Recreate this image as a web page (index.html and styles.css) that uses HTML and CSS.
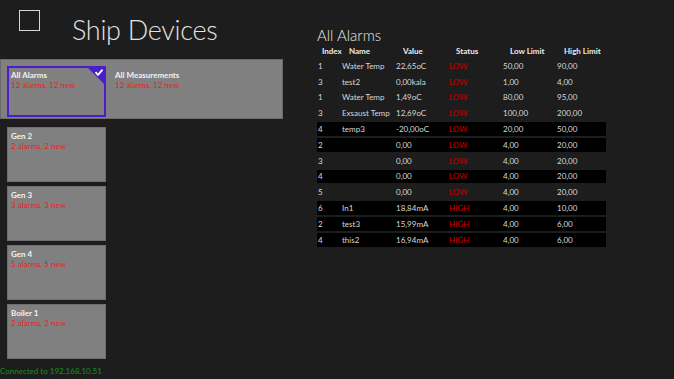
FILE: index.html
```html
<!DOCTYPE html>
<html>
<head>
<meta charset="utf-8">
<title>Ship Devices</title>
<link rel="stylesheet" href="styles.css">
</head>
<body>
<div class="app">
  <div class="left">
    <header class="header">
      <div class="logo-box"></div>
      <h1 class="title">Ship Devices</h1>
    </header>
    <div class="panel">
      <div class="tile tile-selected">
        <div class="tile-name">All Alarms</div>
        <div class="tile-sub">12 alarms, 12 new</div>
        <svg class="check" width="18" height="18" viewBox="0 0 18 18"><polygon points="0,0 18,0 18,18" fill="#4a1ec8"/><path d="M8.5 5.2 L11 7.8 L15.5 2.6" fill="none" stroke="#fff" stroke-width="1.8"/></svg>
      </div>
      <div class="tile tile-flat">
        <div class="tile-name">All Measurements</div>
        <div class="tile-sub">12 alarms, 12 new</div>
      </div>
    </div>
    <div class="tiles">
      <div class="tile"><div class="tile-name">Gen 2</div><div class="tile-sub">2 alarms, 2 new</div></div>
      <div class="tile"><div class="tile-name">Gen 3</div><div class="tile-sub">3 alarms, 3 new</div></div>
      <div class="tile"><div class="tile-name">Gen 4</div><div class="tile-sub">5 alarms, 5 new</div></div>
      <div class="tile"><div class="tile-name">Boiler 1</div><div class="tile-sub">2 alarms, 2 new</div></div>
    </div>
    <div class="status">Connected to 192.168.10.51</div>
  </div>
  <div class="right">
    <h2 class="section-title">All Alarms</h2>
    <div class="table">
      <div class="row head">
        <div class="c-idx">Index</div><div>Name</div><div>Value</div><div>Status</div><div>Low Limit</div><div>High Limit</div>
      </div>
      <div class="row"><div>1</div><div>Water Temp</div><div>22,65oC</div><div class="st">LOW</div><div>50,00</div><div>90,00</div></div>
      <div class="row"><div>3</div><div>test2</div><div>0,00kala</div><div class="st">LOW</div><div>1,00</div><div>4,00</div></div>
      <div class="row"><div>1</div><div>Water Temp</div><div>1,49oC</div><div class="st">LOW</div><div>80,00</div><div>95,00</div></div>
      <div class="row"><div>3</div><div>Exsaust Temp</div><div>12,69oC</div><div class="st">LOW</div><div>100,00</div><div>200,00</div></div>
      <div class="row dark"><div>4</div><div>temp3</div><div>-20,00oC</div><div class="st">LOW</div><div>20,00</div><div>50,00</div></div>
      <div class="row dark"><div>2</div><div></div><div>0,00</div><div class="st">LOW</div><div>4,00</div><div>20,00</div></div>
      <div class="row"><div>3</div><div></div><div>0,00</div><div class="st">LOW</div><div>4,00</div><div>20,00</div></div>
      <div class="row dark"><div>4</div><div></div><div>0,00</div><div class="st">LOW</div><div>4,00</div><div>20,00</div></div>
      <div class="row"><div>5</div><div></div><div>0,00</div><div class="st">LOW</div><div>4,00</div><div>20,00</div></div>
      <div class="row dark"><div>6</div><div>In1</div><div>18,84mA</div><div class="st">HIGH</div><div>4,00</div><div>10,00</div></div>
      <div class="row dark"><div>2</div><div>test3</div><div>15,99mA</div><div class="st">HIGH</div><div>4,00</div><div>6,00</div></div>
      <div class="row dark"><div>4</div><div>this2</div><div>16,94mA</div><div class="st">HIGH</div><div>4,00</div><div>6,00</div></div>
    </div>
  </div>
</div>
</body>
</html>
```
FILE: styles.css
```css
html, body {
  margin: 0;
  padding: 0;
}
body {
  background: #1d1d1d;
  width: 674px;
  height: 379px;
  overflow: hidden;
  font-family: "Lato", "Open Sans", sans-serif;
  color: #e6e6e6;
}
.app {
  display: flex;
  align-items: flex-start;
  gap: 34px;
}
.left {
  width: 283px;
  display: flex;
  flex-direction: column;
}
.header {
  height: 59px;
  display: flex;
  align-items: flex-start;
}
.logo-box {
  width: 19px;
  height: 19px;
  border: 1.5px solid #d6d6d6;
  margin: 10px 0 0 19px;
}
.title {
  margin: 13px 0 0 32px;
  font-size: 27px;
  font-weight: 300;
  line-height: 34px;
  letter-spacing: -0.3px;
  color: #e2e2e2;
}
.panel {
  height: 60px;
  box-sizing: border-box;
  background: #808080;
  border: 1px solid #6a6a6a;
  padding: 6px 0 0 6px;
  display: flex;
  align-items: flex-start;
  gap: 5px;
}
.tile {
  position: relative;
  width: 99px;
  height: 55px;
  box-sizing: border-box;
  background: #808080;
  border: 1px solid #6e6e6e;
  padding: 3px 0 0 3px;
}
.tile-selected {
  height: 51px;
  border: 2px solid #4a1ec8;
  padding: 2px 0 0 2px;
}
.tile-flat {
  border-color: transparent;
  background: transparent;
  width: 160px;
  height: 51px;
}
.check {
  position: absolute;
  top: -1px;
  right: -1px;
}
.tile-name {
  font-size: 8px;
  font-weight: 700;
  color: #f2f2f2;
  line-height: 10px;
}
.tile-sub {
  font-size: 8px;
  color: #ee2020;
  line-height: 10px;
}
.tiles {
  display: flex;
  flex-direction: column;
  gap: 4px;
  padding: 8px 0 0 7px;
}
.status {
  margin-top: 7px;
  font-size: 8px;
  color: #1a8f1a;
  line-height: 10px;
}
.right {
  padding-top: 26px;
}
.section-title {
  margin: 0;
  font-size: 15px;
  font-weight: 300;
  line-height: 18px;
  color: #e6e6e6;
}
.table {
  margin-top: 1px;
  width: 289px;
  display: flex;
  flex-direction: column;
  gap: 2px;
}
.row {
  display: grid;
  grid-template-columns: 24px 54px 53px 54px 54px 50px;
  height: 13.8px;
  align-items: center;
  font-size: 8px;
  color: #d8d8d8;
  line-height: 10px;
  padding-left: 1px;
}
.row.head {
  font-weight: 700;
  color: #ececec;
  height: 12px;
}
.row.head > div {
  padding-left: 7px;
}
.row.head > .c-idx {
  padding-left: 4px;
}
.row.dark {
  background: #000;
}
.st {
  color: #c40000;
}
```
